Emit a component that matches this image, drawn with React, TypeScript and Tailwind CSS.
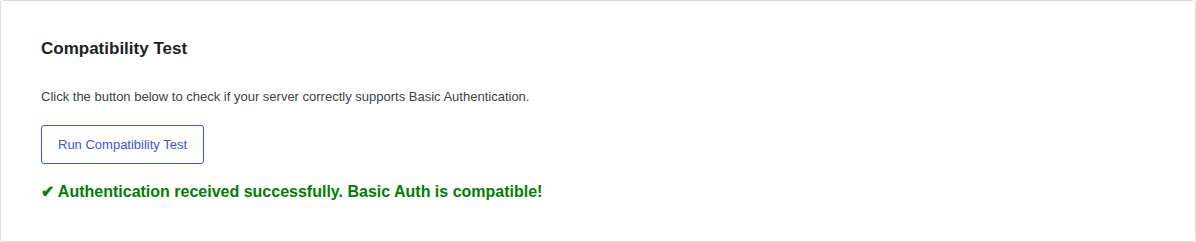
export default function App() {
  return (
    <div className="w-[1196px] h-[242px] bg-white" style={{ fontFamily: '"Liberation Sans", Arial, sans-serif' }}>
      <div className="h-[242px] border border-[#dcdcde] rounded-[4px] bg-white pl-[40px] pt-[38px] flex flex-col items-start">
        <h2 className="text-[17px] leading-[20px] font-bold text-[#1d2327] m-0">Compatibility Test</h2>
        <p className="mt-[28px] text-[13px] leading-[20px] text-[#3c434a]">
          Click the button below to check if your server correctly supports Basic Authentication.
        </p>
        <button className="mt-[18px] h-[39px] px-[16px] border border-solid border-[#3858e9] rounded-[3px] text-[13px] text-[#3858e9] bg-white">
          Run Compatibility Test
        </button>
        <p className="mt-[18px] text-[16px] leading-[20px] font-bold text-[#008000]">
          ✔ Authentication received successfully. Basic Auth is compatible!
        </p>
      </div>
    </div>
  );
}
